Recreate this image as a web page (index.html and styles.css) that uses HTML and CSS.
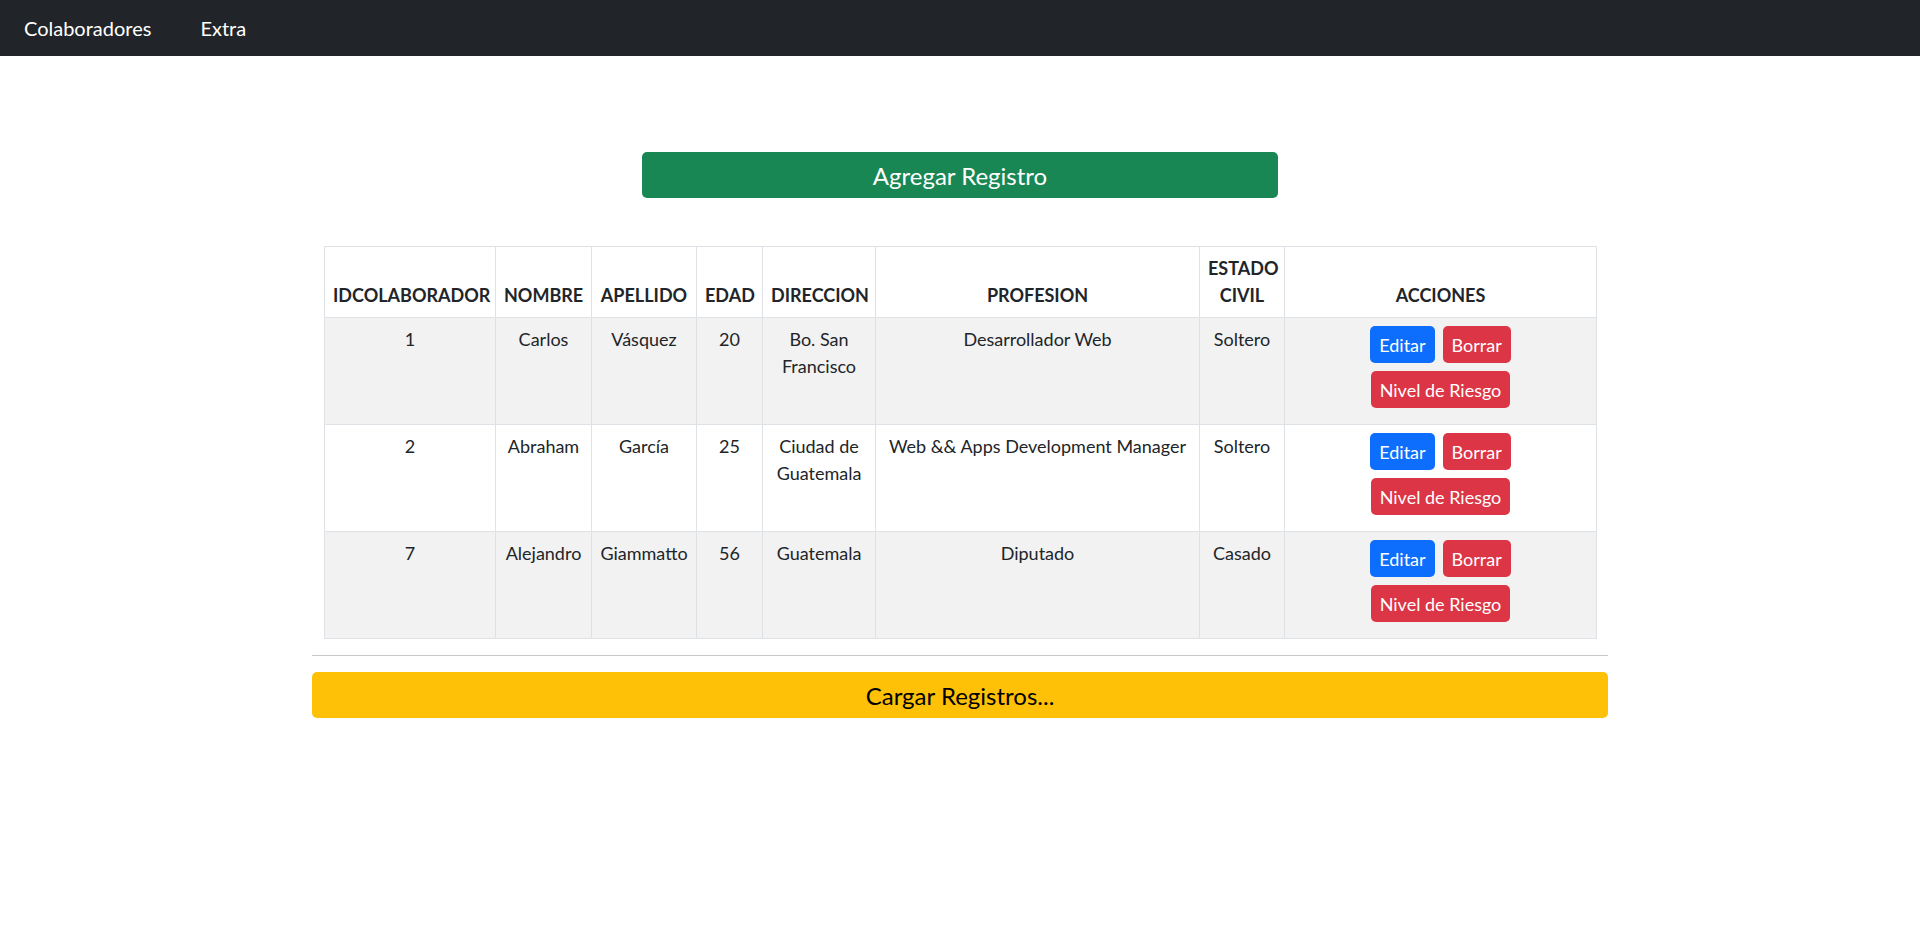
FILE: index.html
```html
<!DOCTYPE html>
<html lang="es">
<head>
<meta charset="utf-8">
<title>Colaboradores</title>
<link rel="stylesheet" href="styles.css">
</head>
<body>
<nav class="navbar">
  <a class="nav-link" href="#">Colaboradores</a>
  <a class="nav-link" href="#">Extra</a>
</nav>
<main class="container">
  <div class="add-row">
    <button class="btn btn-add">Agregar Registro</button>
  </div>
  <div class="table-wrap">
    <table class="data-table">
      <colgroup>
        <col class="c-id"><col class="c-nombre"><col class="c-apellido"><col class="c-edad"><col class="c-dir"><col class="c-prof"><col class="c-estado"><col class="c-acc">
      </colgroup>
      <thead>
        <tr>
          <th>IDCOLABORADOR</th><th>NOMBRE</th><th>APELLIDO</th><th>EDAD</th><th>DIRECCION</th><th>PROFESION</th><th>ESTADO CIVIL</th><th>ACCIONES</th>
        </tr>
      </thead>
      <tbody>
        <tr class="striped">
          <td>1</td><td>Carlos</td><td>Vásquez</td><td>20</td><td>Bo. San Francisco</td><td>Desarrollador Web</td><td>Soltero</td>
          <td>
            <div class="actions"><button class="btn btn-sm btn-blue">Editar</button><button class="btn btn-sm btn-red">Borrar</button></div>
            <div class="actions"><button class="btn btn-sm btn-red">Nivel de Riesgo</button></div>
          </td>
        </tr>
        <tr>
          <td>2</td><td>Abraham</td><td>García</td><td>25</td><td>Ciudad de Guatemala</td><td>Web &amp;&amp; Apps Development Manager</td><td>Soltero</td>
          <td>
            <div class="actions"><button class="btn btn-sm btn-blue">Editar</button><button class="btn btn-sm btn-red">Borrar</button></div>
            <div class="actions"><button class="btn btn-sm btn-red">Nivel de Riesgo</button></div>
          </td>
        </tr>
        <tr class="striped">
          <td>7</td><td>Alejandro</td><td>Giammatto</td><td>56</td><td>Guatemala</td><td>Diputado</td><td>Casado</td>
          <td>
            <div class="actions"><button class="btn btn-sm btn-blue">Editar</button><button class="btn btn-sm btn-red">Borrar</button></div>
            <div class="actions"><button class="btn btn-sm btn-red">Nivel de Riesgo</button></div>
          </td>
        </tr>
      </tbody>
    </table>
  </div>
  <hr class="divider">
  <button class="btn btn-load">Cargar Registros...</button>
</main>
</body>
</html>
```
FILE: styles.css
```css
* { box-sizing: border-box; }

body {
  margin: 0;
  font-family: Lato, "Liberation Sans", sans-serif;
  font-size: 18px;
  line-height: 1.5;
  color: #212529;
  background: #fff;
}

.navbar {
  height: 56px;
  background: #212529;
  display: flex;
  align-items: center;
  gap: 49px;
  padding-left: 24px;
}

.nav-link {
  color: #fff;
  font-size: 20px;
  text-decoration: none;
}

.container {
  max-width: 1320px;
  margin: 0 auto;
  padding: 0 12px;
}

.add-row {
  display: flex;
  justify-content: center;
  padding-top: 96px;
}

.btn {
  font-family: inherit;
  border: 0;
  border-radius: 5px;
  cursor: pointer;
}

.btn-add {
  width: 636px;
  height: 46px;
  background: #198754;
  color: #fff;
  font-size: 24px;
}

.table-wrap {
  padding: 48px 12px 0;
}

.data-table {
  width: 100%;
  border-collapse: collapse;
  table-layout: fixed;
}

.c-id { width: 171px; }
.c-nombre { width: 96px; }
.c-apellido { width: 105px; }
.c-edad { width: 66px; }
.c-dir { width: 113px; }
.c-prof { width: 324px; }
.c-estado { width: 85px; }
.c-acc { width: 312px; }

.data-table th,
.data-table td {
  border: 1px solid #dee2e6;
  padding: 8px;
  text-align: center;
}

.data-table th {
  vertical-align: bottom;
  font-weight: 700;
  background: #fff;
}

.data-table td {
  vertical-align: top;
}

.data-table tr.striped td {
  background: #f2f2f2;
}

.actions {
  display: flex;
  justify-content: center;
  gap: 8px;
  margin-bottom: 8px;
}

.btn-sm {
  height: 37px;
  padding: 0 9px;
  font-size: 18px;
  color: #fff;
}

.btn-blue { background: #0d6efd; }
.btn-red { background: #dc3545; }

.divider {
  margin: 16px 0;
  border: 0;
  border-top: 1px solid #c8c9ca;
}

.btn-load {
  display: block;
  width: 100%;
  height: 46px;
  background: #ffc107;
  color: #000;
  font-size: 24px;
}
```
